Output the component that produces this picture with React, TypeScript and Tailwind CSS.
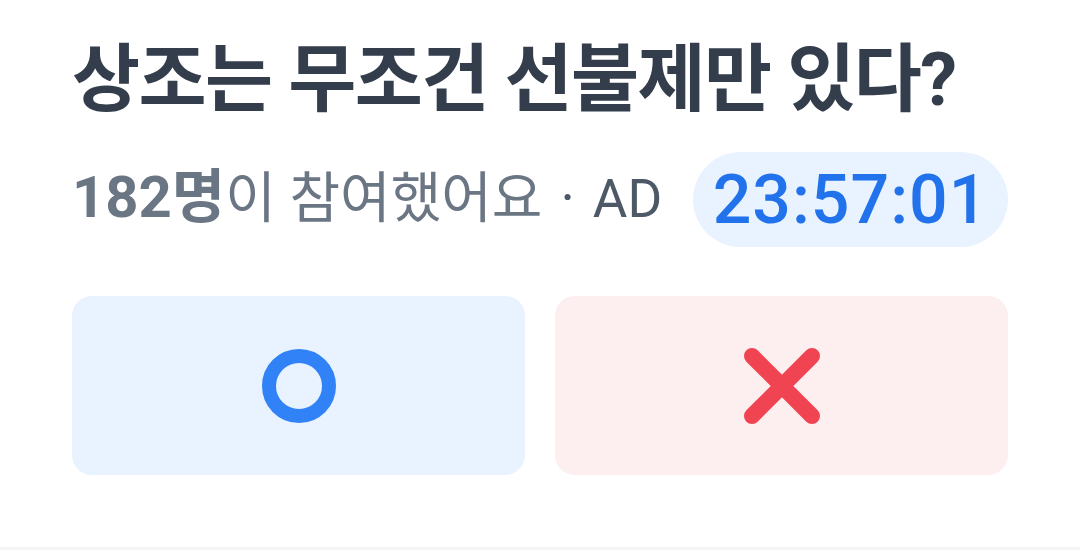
import React from "react";

export default function App() {
  return (
    <div
      className="w-[1080px] h-[550px] bg-white relative overflow-hidden"
      style={{ fontFamily: 'Roboto, "Noto Sans CJK KR", sans-serif' }}
    >
      <div className="px-[72px] pt-[30px]">
        <h1 className="text-[74px] leading-[100px] font-bold text-[#333d4b] tracking-[-1.6px]">
          상조는 무조건 선불제만 있다?
        </h1>

        <div className="flex items-center justify-between mt-[22px]">
          <p className="text-[55px] text-[#6b7684] leading-none flex items-baseline pb-[6px]">
            <span className="font-bold text-[58px]">182명</span>
            <span>이 참여했어요</span>
            <span className="text-[#4e5968] mx-[18px]">·</span>
            <span className="text-[#4e5968] text-[53px]">AD</span>
          </p>
          <div className="h-[95px] w-[315px] rounded-full bg-[#e8f3ff] flex items-center justify-center">
            <span className="text-[68px] font-medium text-[#2272eb] tabular-nums tracking-[1px]">23:57:01</span>
          </div>
        </div>

        <div className="grid grid-cols-2 gap-[30px] mt-[49px]">
          <button className="h-[179px] rounded-[20px] bg-[#e8f3ff] flex items-center justify-center">
            <svg width="76" height="76" viewBox="0 0 76 76">
              <circle cx="38" cy="38" r="30" fill="none" stroke="#3182f6" strokeWidth="14" />
            </svg>
          </button>
          <button className="h-[179px] rounded-[20px] bg-[#fdeeef] flex items-center justify-center">
            <svg width="80" height="80" viewBox="0 0 80 80">
              <path d="M10 10 L70 70 M70 10 L10 70" stroke="#f04452" strokeWidth="16" strokeLinecap="round" />
            </svg>
          </button>
        </div>
      </div>
      <div className="absolute left-0 right-0 bottom-0 h-[3px] bg-[#f2f4f6]" />
    </div>
  );
}
